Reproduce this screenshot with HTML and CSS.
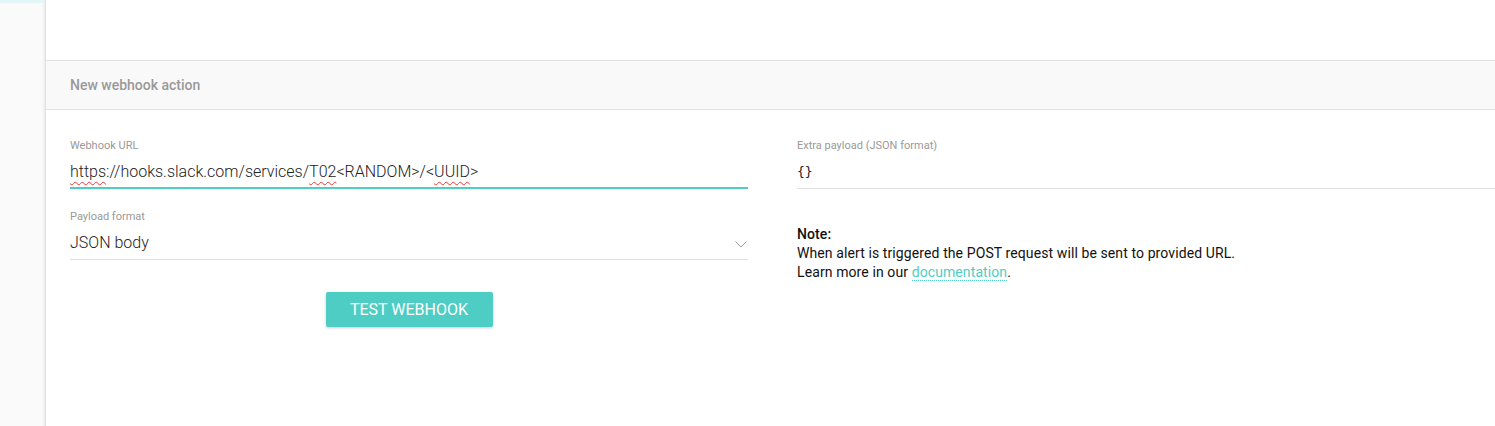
FILE: index.html
```html
<!DOCTYPE html>
<html>
<head>
<meta charset="utf-8">
<link rel="stylesheet" href="styles.css">
</head>
<body>
<div class="layout">
  <aside class="sidebar"><div class="sidebar-top"></div></aside>
  <main class="main">
    <div class="spacer"></div>
    <div class="panel-header">New webhook action</div>
    <div class="panel-body">
      <div class="col-left">
        <div class="field">
          <label class="field-label">Webhook URL</label>
          <div class="field-value field-active"><span class="sp">https</span>://hooks.slack.com/services/<span class="sp">T02</span>&lt;RANDOM&gt;/&lt;<span class="sp">UUID</span>&gt;</div>
        </div>
        <div class="field">
          <label class="field-label">Payload format</label>
          <div class="field-value field-select">
            <span>JSON body</span>
            <svg class="chev" width="12" height="7" viewBox="0 0 12 7"><path d="M0.5 0.5 L6 6 L11.5 0.5" fill="none" stroke="#999" stroke-width="1"/></svg>
          </div>
        </div>
        <div class="btn-row">
          <button class="btn">TEST WEBHOOK</button>
        </div>
      </div>
      <div class="col-right">
        <div class="field">
          <label class="field-label">Extra payload (JSON format)</label>
          <div class="field-value field-mono">{}</div>
        </div>
        <div class="note">
          <div class="note-title">Note:</div>
          <div>When alert is triggered the POST request will be sent to provided URL.</div>
          <div>Learn more in our <a class="link" href="#">documentation</a>.</div>
        </div>
      </div>
    </div>
  </main>
</div>
</body>
</html>
```
FILE: styles.css
```css
* { box-sizing: border-box; }
html, body { margin: 0; padding: 0; height: 100%; }
body {
  font-family: Roboto, "Liberation Sans", sans-serif;
  background: #fff;
  color: #333;
  overflow: hidden;
}
.layout {
  display: flex;
  height: 426px;
}
.sidebar {
  width: 46px;
  flex: none;
  background: #fafafa;
  border-right: 1px solid #e2e2e2;
  box-shadow: inset -3px 0 3px -2px rgba(0,0,0,0.08);
}
.sidebar-top {
  height: 3px;
  width: 43px;
  background: #e3f8f6;
}
.main {
  flex: 1;
  min-width: 0;
  display: flex;
  flex-direction: column;
}
.spacer { height: 60px; }
.panel-header {
  height: 50px;
  background: #f9f9f9;
  border-top: 1px solid #e2e2e2;
  border-bottom: 1px solid #e2e2e2;
  padding: 0 24px;
  display: flex;
  align-items: center;
  font-size: 14px;
  font-weight: 500;
  color: #999;
}
.panel-body {
  display: grid;
  grid-template-columns: 678px 1fr;
  column-gap: 49px;
  padding: 29px 0 0 24px;
}
.field { margin-bottom: 21px; }
.field-label {
  display: block;
  font-size: 11px;
  color: #999;
  line-height: 14px;
  margin-bottom: 6px;
}
.field-value {
  font-size: 16px;
  font-weight: 300;
  line-height: 24px;
  color: #222;
  padding: 1px 0 4px;
  border-bottom: 1px solid #e0e0e0;
}
.field-active {
  border-bottom: 2px solid #4ecdc4;
  padding-bottom: 3px;
}
.sp {
  text-decoration: underline wavy #e53935;
  text-decoration-thickness: 1px;
  text-underline-offset: 4px;
}
.field-select {
  display: flex;
  justify-content: space-between;
  align-items: center;
  padding-bottom: 4px;
}
.chev { margin-right: 1px; margin-top: 2px; }
.field-mono {
  font-family: "DejaVu Sans Mono", "Liberation Mono", monospace;
  font-weight: 400;
  font-size: 13px;
}
.btn-row {
  display: flex;
  justify-content: center;
  padding-top: 11px;
}
.btn {
  width: 167px;
  height: 35px;
  border: none;
  border-radius: 2px;
  background: #4ecdc4;
  color: #fff;
  font-family: Roboto, "Liberation Sans", sans-serif;
  font-size: 16px;
  letter-spacing: 0;
  box-shadow: 0 1px 3px rgba(0,0,0,0.2);
  padding: 0;
}
.note {
  margin-top: 36px;
  font-size: 14px;
  line-height: 19px;
  letter-spacing: 0.1px;
  color: #111;
}
.note-title { font-weight: 500; }
.link {
  color: #4ecdc4;
  text-decoration: none;
  border-bottom: 1px dotted #4ecdc4;
}
```
